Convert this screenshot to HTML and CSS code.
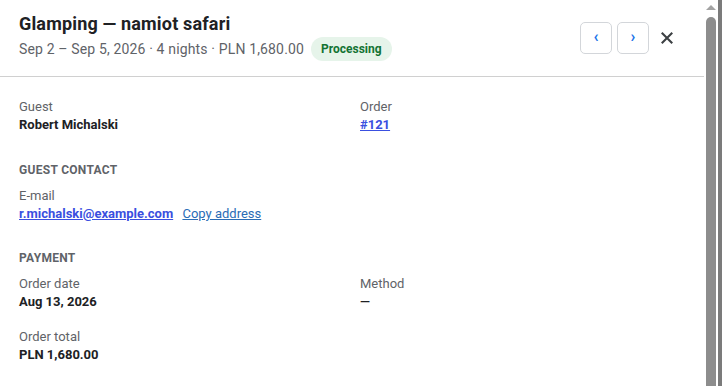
FILE: index.html
```html
<!DOCTYPE html>
<html lang="en">
<head>
    <meta charset="UTF-8">
    <meta name="viewport" content="width=device-width, initial-scale=1.0">
    <title>Booking details</title>
    <link rel="stylesheet" href="styles.css">
</head>
<body>
    <div class="drawer">
        <div class="drawer-head">
            <div class="head-text">
                <h1 class="title">Glamping — namiot safari</h1>
                <div class="subtitle">
                    <span>Sep 2 – Sep 5, 2026 · 4 nights · PLN 1,680.00</span>
                    <span class="badge">Processing</span>
                </div>
            </div>
            <div class="head-actions">
                <button class="nav-btn" aria-label="Previous">&lsaquo;</button>
                <button class="nav-btn" aria-label="Next">&rsaquo;</button>
                <button class="close-btn" aria-label="Close">
                    <svg width="12" height="12" viewBox="0 0 12 12">
                        <path d="M1.5 1.5 L10.5 10.5 M10.5 1.5 L1.5 10.5" stroke="#3c4043" stroke-width="2.1" stroke-linecap="square"/>
                    </svg>
                </button>
            </div>
        </div>

        <div class="drawer-body">
            <div class="grid">
                <div class="field">
                    <div class="label">Guest</div>
                    <div class="value">Robert Michalski</div>
                </div>
                <div class="field">
                    <div class="label">Order</div>
                    <div class="value"><a class="link" href="#">#121</a></div>
                </div>
            </div>

            <h2 class="section-title">Guest contact</h2>
            <div class="field">
                <div class="label">E-mail</div>
                <div class="value">
                    <a class="link" href="#">r.michalski@example.com</a>
                    <a class="copy-link" href="#">Copy address</a>
                </div>
            </div>

            <h2 class="section-title section-payment">Payment</h2>
            <div class="grid">
                <div class="field">
                    <div class="label">Order date</div>
                    <div class="value">Aug 13, 2026</div>
                </div>
                <div class="field">
                    <div class="label">Method</div>
                    <div class="value">—</div>
                </div>
                <div class="field">
                    <div class="label">Order total</div>
                    <div class="value">PLN 1,680.00</div>
                </div>
            </div>
        </div>
    </div>
    <div class="scrollbar">
        <div class="scroll-up"></div>
        <div class="scroll-thumb"></div>
    </div>
</body>
</html>
```

FILE: styles.css
```css
body {
    margin: 0;
    padding: 0;
    height: 100vh;
    overflow: hidden;
    display: flex;
    background: #7b7b7b;
    font-family: Roboto, 'Noto Sans', sans-serif;
    color: #202124;
}

.drawer {
    width: 704px;
    flex-shrink: 0;
    background: white;
    overflow: hidden;
}

.scrollbar {
    width: 14px;
    flex-shrink: 0;
    background: white;
    display: flex;
    flex-direction: column;
    align-items: center;
    padding-top: 5px;
}

.scroll-up {
    width: 0;
    height: 0;
    border-left: 5px solid transparent;
    border-right: 5px solid transparent;
    border-bottom: 5px solid #a3a3a3;
}

.scroll-thumb {
    width: 10px;
    flex: 1;
    margin-top: 7px;
    margin-bottom: -10px;
    background: #8d8d8d;
    border-radius: 5px 5px 0 0;
}

.drawer-head {
    display: flex;
    justify-content: space-between;
    align-items: flex-start;
    padding: 13px 21px 15px 19px;
    border-bottom: 1px solid #d0d0d0;
}

.title {
    margin: 0;
    font-size: 18px;
    font-weight: 700;
    line-height: 22px;
    letter-spacing: 0.17px;
    color: #202124;
}

.subtitle {
    display: flex;
    align-items: center;
    gap: 7px;
    margin-top: 2px;
    font-size: 14px;
    letter-spacing: 0.15px;
    color: #5f6368;
}

.badge {
    background: #e6f4ea;
    color: #137333;
    font-size: 12px;
    font-weight: 700;
    letter-spacing: 0;
    padding: 0 10px;
    line-height: 24px;
    border-radius: 12px;
}

.head-actions {
    display: flex;
    align-items: center;
    gap: 5px;
    margin-top: 9px;
}

.nav-btn {
    width: 32px;
    height: 32px;
    border: 1px solid #d3d6da;
    border-radius: 5px;
    background: white;
    color: #1a73e8;
    font-family: Roboto, sans-serif;
    font-size: 16px;
    font-weight: 700;
    line-height: 1;
    padding: 0 0 2px 0;
    cursor: pointer;
}

.close-btn {
    width: 32px;
    height: 32px;
    margin-left: -3px;
    border: none;
    background: none;
    padding: 0;
    display: flex;
    align-items: center;
    justify-content: center;
    cursor: pointer;
}

.drawer-body {
    padding: 21px 19px 0 19px;
    font-size: 13px;
}

.grid {
    display: grid;
    grid-template-columns: 1fr 1fr;
    column-gap: 16px;
    row-gap: 17px;
}

.field .label {
    color: #5f6368;
    line-height: 18px;
}

.field .value {
    font-weight: 700;
    line-height: 18px;
    color: #202124;
}

.field .link {
    color: #3a4fe0;
    font-weight: 700;
    text-decoration: underline;
}

.field .copy-link {
    margin-left: 6px;
    font-weight: 400;
    color: #2a6cb6;
    text-decoration: underline;
}

.section-title {
    margin: 28px 0 9px 0;
    font-size: 12px;
    font-weight: 700;
    text-transform: uppercase;
    letter-spacing: 0.3px;
    color: #5f6368;
    line-height: 16px;
}

.section-payment {
    margin-top: 27px;
}
```
